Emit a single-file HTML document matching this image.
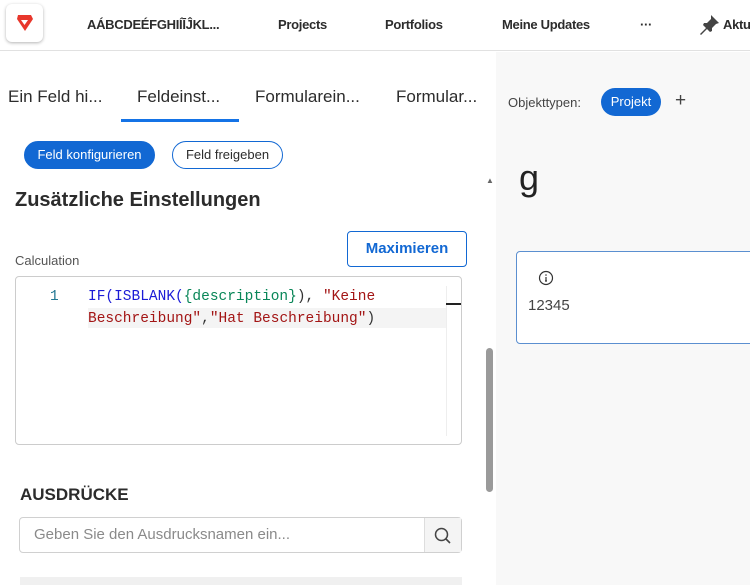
<!DOCTYPE html>
<html><head><meta charset="utf-8"><style>
*{box-sizing:border-box;margin:0;padding:0}
body{width:750px;height:585px;overflow:hidden;background:#fff;font-family:"Liberation Sans",sans-serif;color:#2c2c2c;position:relative}
.abs{position:absolute}
.top{left:0;top:0;width:750px;height:51px;border-bottom:1px solid #e1e1e1;background:#fff}
.nav{font-size:13px;top:17px;color:#2c2c2c;font-weight:bold;letter-spacing:-0.3px}
.right{left:496px;top:52px;width:254px;height:533px;background:#f8f8f8}
.tab{font-size:17px;top:87px;color:#2c2c2c}
.btn{border-radius:14px;height:28px;font-size:13px;line-height:26px;text-align:center}
.mono{font-family:"Liberation Mono",monospace;font-size:14.5px}
</style></head><body>
<div class="abs top"></div>
<div class="abs" style="left:6px;top:4px;width:37px;height:38px;border-radius:6px;background:#fff;box-shadow:0 1px 3px rgba(0,0,0,.3)">
<svg width="37" height="38" viewBox="0 0 37 38"><path d="M12 11h13l2 4-8 12-8-12z" fill="#e8372c"/><path d="M15 16h7l-3.5 5z" fill="#fff"/></svg></div>
<div class="abs nav" style="left:87px;">AÁBCDEÉFGHIÍĪĴKL...</div>
<div class="abs nav" style="left:278px">Projects</div>
<div class="abs nav" style="left:385px">Portfolios</div>
<div class="abs nav" style="left:502px">Meine Updates</div>
<div class="abs nav" style="left:640px;font-weight:bold">···</div>
<svg class="abs" style="left:699px;top:13px" width="22" height="22" viewBox="0 0 22 22"><path d="M12 2l8 8-3 1-4 4 0 3-2 1-3-3-6 6-1-1 6-6-3-3 1-2 3 0 4-4z" fill="#444"/></svg>
<div class="abs nav" style="left:723px">Aktu</div>

<div class="abs right"></div>
<div class="abs tab" style="left:8px">Ein Feld hi...</div>
<div class="abs tab" style="left:137px">Feldeinst...</div>
<div class="abs tab" style="left:255px">Formularein...</div>
<div class="abs tab" style="left:396px">Formular...</div>
<div class="abs" style="left:121px;top:119px;width:118px;height:3px;background:#1473e6"></div>
<div class="abs" style="left:508px;top:95px;font-size:13px;color:#444">Objekttypen:</div>
<div class="abs btn" style="left:601px;top:88px;width:60px;background:#1268d3;color:#fff;line-height:28px">Projekt</div>
<div class="abs" style="left:675px;top:90px;font-size:19px;color:#444">+</div>

<div class="abs btn" style="left:24px;top:141px;width:131px;background:#1268d3;color:#fff;border:1px solid #1268d3">Feld konfigurieren</div>
<div class="abs btn" style="left:172px;top:141px;width:111px;border:1px solid #1268d3;color:#2c2c2c">Feld freigeben</div>
<div class="abs" style="left:15px;top:189px;font-size:20px;font-weight:bold">Zusätzliche Einstellungen</div>
<div class="abs" style="left:15px;top:253px;font-size:13px;color:#555">Calculation</div>
<div class="abs" style="left:347px;top:231px;width:120px;height:36px;border:1px solid #1268d3;border-radius:4px;text-align:center;line-height:34px;font-size:15px;font-weight:bold;color:#1268d3">Maximieren</div>
<div class="abs" style="left:15px;top:276px;width:447px;height:169px;border:1px solid #ccc;border-radius:4px"></div>
<div class="abs" style="left:88px;top:308px;width:358px;height:20px;background:#f4f4f4"></div>
<div class="abs" style="left:446px;top:286px;width:1px;height:150px;background:#eee"></div>
<div class="abs" style="left:446px;top:303px;width:15px;height:2px;background:#222"></div>
<div class="abs mono" style="left:50px;top:289px;color:#237893">1</div>
<div class="abs mono" style="left:88px;top:289px;white-space:pre"><span style="color:#1b1bd6">IF(ISBLANK(</span><span style="color:#098658">{description}</span><span style="color:#333">), </span><span style="color:#a31515">"Keine</span></div>
<div class="abs mono" style="left:88px;top:311px;white-space:pre"><span style="color:#a31515">Beschreibung"</span><span style="color:#333">,</span><span style="color:#a31515">"Hat Beschreibung"</span><span style="color:#333">)</span></div>
<div class="abs" style="left:20px;top:485px;font-size:17px;font-weight:bold">AUSDRÜCKE</div>
<div class="abs" style="left:19px;top:517px;width:443px;height:36px;border:1px solid #d0d0d0;border-radius:4px"></div>
<div class="abs" style="left:424px;top:518px;width:37px;height:34px;background:#f4f4f4;border-left:1px solid #ddd"></div>
<svg class="abs" style="left:433px;top:526px" width="20" height="20" viewBox="0 0 20 20"><circle cx="8.5" cy="8.5" r="6" fill="none" stroke="#444" stroke-width="1.5"/><path d="M13 13l4 4" stroke="#444" stroke-width="1.6"/></svg>
<div class="abs" style="left:34px;top:526px;font-size:15px;color:#8a8a8a">Geben Sie den Ausdrucksnamen ein...</div>
<div class="abs" style="left:20px;top:577px;width:442px;height:8px;background:#f0f0f0"></div>
<div class="abs" style="left:486px;top:176px;font-size:8px;color:#666">▲</div>
<div class="abs" style="left:486px;top:348px;width:7px;height:144px;border-radius:4px;background:#9a9a9a"></div>
<div class="abs" style="left:519px;top:157px;font-size:36px;color:#222">g</div>
<div class="abs" style="left:516px;top:251px;width:240px;height:93px;background:#fff;border:1px solid #5b8fd0;border-radius:4px"></div>
<svg class="abs" style="left:538px;top:270px" width="16" height="16" viewBox="0 0 16 16"><circle cx="8" cy="8" r="6.5" fill="none" stroke="#333" stroke-width="1.2"/><path d="M8 7v4M7 11h2" stroke="#333" stroke-width="1.2"/><circle cx="8" cy="5" r=".8" fill="#333"/></svg>
<div class="abs" style="left:528px;top:297px;font-size:15px;color:#444">12345</div>
</body></html>
